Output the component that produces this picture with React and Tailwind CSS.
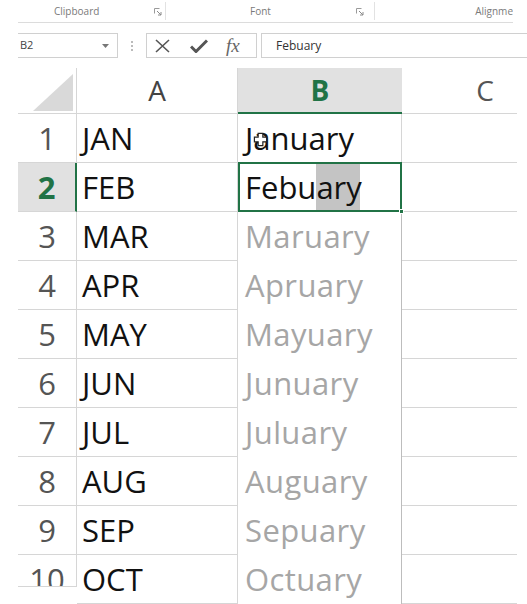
import React from "react";

const rows = [
  ["1", "JAN", "January"],
  ["2", "FEB", "Febuary"],
  ["3", "MAR", "Maruary"],
  ["4", "APR", "Apruary"],
  ["5", "MAY", "Mayuary"],
  ["6", "JUN", "Junuary"],
  ["7", "JUL", "Juluary"],
  ["8", "AUG", "Auguary"],
  ["9", "SEP", "Sepuary"],
  ["10", "OCT", "Octuary"],
];

const Launcher = () => (
  <svg width="8" height="8" viewBox="0 0 8 8" className="mt-[2px]">
    <path d="M0.5 0.5h5M0.5 0.5v5" stroke="#9a9a9a" strokeWidth="1" fill="none" />
    <path d="M3 3l4 4M7 4v3h-3" stroke="#8a8a8a" strokeWidth="1" fill="none" />
  </svg>
);

const Cursor = () => (
  <svg width="15" height="15" viewBox="0 0 16 16" className="absolute left-[15px] top-[18px]">
    <path
      d="M5.5 1.5h5v4h4v5h-4v4h-5v-4h-4v-5h4z"
      fill="#fff"
      stroke="#222"
      strokeWidth="1.3"
    />
  </svg>
);

const App = () => {
  return (
    <div className="w-[527px] h-[604px] bg-white overflow-hidden font-['Open_Sans',sans-serif]">
      {/* ribbon group labels */}
      <div className="ml-[18px] w-[495px] h-[23px] flex border-b border-[#dcdcdc] text-[10px] text-[#7a7a7a]">
        <div className="w-[148px] flex items-center border-r border-[#e2e2e2] my-[2px]">
          <span className="ml-[36px] w-[100px]">Clipboard</span>
          <Launcher />
        </div>
        <div className="w-[209px] flex items-center border-r border-[#e2e2e2] my-[2px]">
          <span className="ml-[84px] w-[106px]">Font</span>
          <Launcher />
        </div>
        <div className="flex-1 flex items-center justify-end overflow-hidden whitespace-nowrap">
          <span>Alignme</span>
        </div>
      </div>

      {/* name box + formula bar */}
      <div className="mt-[10px] h-[25px] flex items-stretch">
        <div className="ml-[18px] w-[100px] border border-[#d0d0d0] border-l-0 flex items-center justify-between pl-[2px] pr-[8px] text-[11px] text-[#444]">
          <span>B2</span>
          <svg width="7" height="4" viewBox="0 0 7 4">
            <path d="M0 0h7l-3.5 4z" fill="#777" />
          </svg>
        </div>
        <div className="w-[28px] flex flex-col items-center justify-center gap-[2px]">
          <span className="w-[2px] h-[2px] bg-[#bbb]" />
          <span className="w-[2px] h-[2px] bg-[#bbb]" />
          <span className="w-[2px] h-[2px] bg-[#bbb]" />
        </div>
        <div className="w-[111px] border border-[#d0d0d0] flex items-center pl-[8px] gap-[20px]">
          <svg width="15" height="14" viewBox="0 0 15 14">
            <path d="M1 1l13 12M14 1L1 13" stroke="#555" strokeWidth="1.6" fill="none" />
          </svg>
          <svg width="18" height="14" viewBox="0 0 18 14">
            <path d="M1 7.5l5 5L17 1.5" stroke="#555" strokeWidth="3" fill="none" />
          </svg>
          <span className="font-['Liberation_Serif',serif] italic text-[19px] leading-none text-[#666] -ml-[2px]">
            fx
          </span>
        </div>
        <div className="ml-[4px] flex-1 border border-[#d0d0d0] border-r-0 flex items-center pl-[14px] text-[12px] text-[#333]">
          Febuary
        </div>
      </div>

      {/* sheet grid, clipped where the gridlines stop */}
      <div className="ml-[18px] w-[499px] overflow-hidden">
        <div className="w-[550px]">
          {/* column headers */}
          <div className="mt-[10px] flex h-[46px] text-[28px] leading-[44px]">
            <div className="w-[59px] border-r border-b border-[#d6d6d6] relative">
              <svg width="40" height="37" viewBox="0 0 40 37" className="absolute left-[15px] top-[6px]">
                <path d="M40 0V37H0z" fill="#d9d9d9" />
              </svg>
            </div>
            <div className="w-[161px] border-r border-b border-[#d6d6d6] text-center text-[#444]">A</div>
            <div className="w-[164px] bg-[#e1e1e1] border-b-2 border-[#217346] text-center font-bold text-[#217346]">
              B
            </div>
            <div className="w-[166px] border-b border-[#d6d6d6] text-center text-[#555]">C</div>
          </div>

          {/* rows */}
          <div className="text-[31px] leading-[48px]">
            {rows.map(([n, a, b], i) => {
              const active = i === 1;
              const preview = i >= 2;
              const last = i === rows.length - 1;
              return (
                <div key={n} className="flex h-[49px]">
                  <div
                    className={`w-[59px] text-center border-b ${
                      active
                        ? "bg-[#e1e1e1] text-[#217346] font-bold border-r-2 border-r-[#217346] border-b-[#d6d6d6]"
                        : "text-[#555] border-r border-[#d6d6d6]"
                    } ${last ? "h-[32px] overflow-hidden" : ""}`}
                  >
                    {n}
                  </div>
                  <div className="w-[161px] border-r border-b border-[#d6d6d6] pl-[5px] text-[#111]">{a}</div>
                  {active ? (
                    <div className="w-[164px] relative border-2 border-[#217346] -mt-[1px] h-[50px] pl-[5px] leading-[46px] text-[#111]">
                      Febu<span className="bg-[#c4c4c4] inline-block h-[46px] pr-[14px] -mr-[14px]">ar</span>y
                      <span className="absolute -right-[4px] -bottom-[4px] w-[5px] h-[5px] bg-[#217346] border border-white" />
                    </div>
                  ) : preview ? (
                    <div className="w-[164px] border-r border-[#bdbdbd] pl-[7px] text-[#a6a6a6] tracking-[0.4px]">{b}</div>
                  ) : (
                    <div className="w-[164px] relative border-r border-[#d6d6d6] pl-[7px] text-[#111]">
                      {b}
                      <Cursor />
                    </div>
                  )}
                  <div className="w-[166px] border-b border-[#d6d6d6]" />
                </div>
              );
            })}
          </div>
        </div>
      </div>
    </div>
  );
};

export default App;
